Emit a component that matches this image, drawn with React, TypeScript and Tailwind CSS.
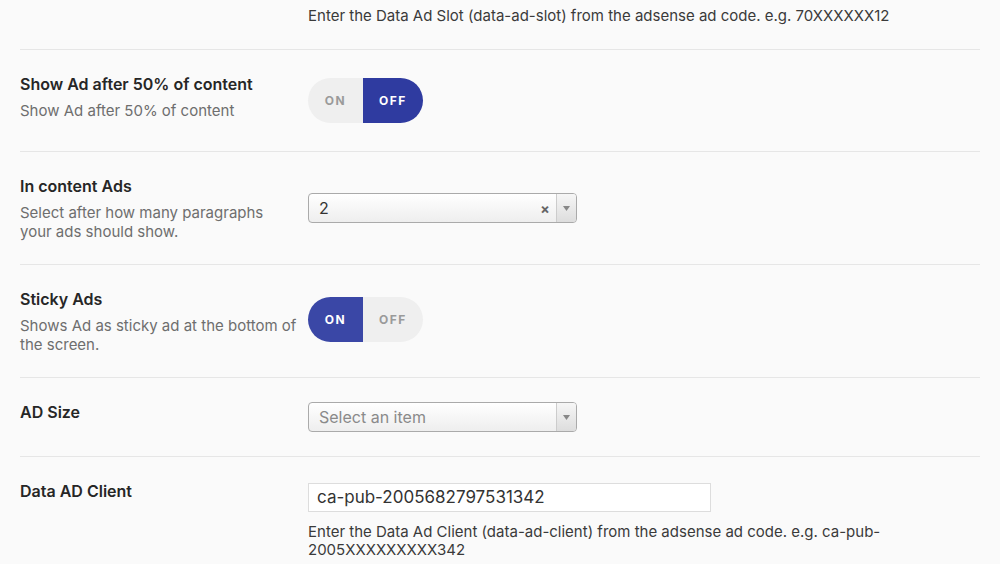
import React from "react";

const font = { fontFamily: "Inter, 'Noto Sans', sans-serif" };

const Toggle: React.FC<{ on: boolean }> = ({ on }) => (
  <div className="flex h-[45px] w-[115px] text-[12px] font-bold tracking-[1.5px]">
    <div
      className={
        on
          ? "flex w-[55px] items-center justify-center rounded-l-full bg-[#3a47a6] text-white"
          : "flex w-[55px] items-center justify-center rounded-l-full bg-[#efefef] text-[#9a9a9a]"
      }
    >
      ON
    </div>
    <div
      className={
        on
          ? "flex w-[60px] items-center justify-center rounded-r-full bg-[#efefef] text-[#9a9a9a]"
          : "flex w-[60px] items-center justify-center rounded-r-full bg-[#2f3ba0] text-white"
      }
    >
      OFF
    </div>
  </div>
);

const Select: React.FC<{ value?: string; placeholder?: string }> = ({ value, placeholder }) => (
  <div className="flex h-[30px] w-[269px] items-stretch overflow-hidden rounded-[4px] border border-[#aaaaaa] bg-gradient-to-b from-white to-[#eeeeee]">
    <div className="flex flex-1 items-center pl-[10px] text-[16px]">
      {value ? (
        <span className="text-[#333]">{value}</span>
      ) : (
        <span className="text-[#8a8a8a]">{placeholder}</span>
      )}
    </div>
    {value && (
      <div className="flex w-[22px] items-center justify-center text-[14px] font-bold text-[#666]">×</div>
    )}
    <div className="flex w-[20px] items-center justify-center border-l border-[#cccccc] bg-gradient-to-b from-[#f6f6f6] to-[#dddddd]">
      <svg width="7" height="5" viewBox="0 0 7 5">
        <path d="M0 0 L7 0 L3.5 5 Z" fill="#888" />
      </svg>
    </div>
  </div>
);

const Label: React.FC<{ title: string; desc?: React.ReactNode }> = ({ title, desc }) => (
  <div className="w-[288px] shrink-0 pr-2">
    <div className="text-[16px] font-semibold leading-5 text-[#262626]">{title}</div>
    {desc && <div className="mt-[7px] text-[15px] leading-[19px] text-[#6e6e6e]">{desc}</div>}
  </div>
);

export default function App() {
  return (
    <div className="min-h-[564px] w-[1000px] bg-[#fafafa] px-5" style={font}>
      <div className="flex h-[49px] pl-[288px] pt-[6px]">
        <p className="text-[15px] leading-5 text-[#3a3a3a]">
          Enter the Data Ad Slot (data-ad-slot) from the adsense ad code. e.g. 70XXXXXX12
        </p>
      </div>

      <div className="flex h-[102px] border-t border-[#e6e6e6] pt-6">
        <Label title="Show Ad after 50% of content" desc="Show Ad after 50% of content" />
        <div className="mt-[4px]">
          <Toggle on={false} />
        </div>
      </div>

      <div className="flex h-[113px] border-t border-[#e6e6e6] pt-6">
        <Label
          title="In content Ads"
          desc={
            <>
              Select after how many paragraphs
              <br />
              your ads should show.
            </>
          }
        />
        <div className="mt-[17px]">
          <Select value="2" />
        </div>
      </div>

      <div className="flex h-[113px] border-t border-[#e6e6e6] pt-6">
        <Label
          title="Sticky Ads"
          desc={
            <>
              Shows Ad as sticky ad at the bottom of
              <br />
              the screen.
            </>
          }
        />
        <div className="mt-[8px]">
          <Toggle on={true} />
        </div>
      </div>

      <div className="flex h-[79px] border-t border-[#e6e6e6] pt-6">
        <Label title="AD Size" />
        <div>
          <Select placeholder="Select an item" />
        </div>
      </div>

      <div className="flex border-t border-[#e6e6e6] pt-6">
        <Label title="Data AD Client" />
        <div className="mt-[2px] w-[600px]">
          <div className="flex h-[29px] w-[403px] items-center border border-[#dddddd] bg-white pl-[8px] text-[17px] text-[#333]">
            ca-pub-2005682797531342
          </div>
          <p className="mt-[11px] text-[15px] leading-[18px] text-[#3a3a3a]">
            Enter the Data Ad Client (data-ad-client) from the adsense ad code. e.g. ca-pub-
            <br />
            2005XXXXXXXXX342
          </p>
        </div>
      </div>
    </div>
  );
}
